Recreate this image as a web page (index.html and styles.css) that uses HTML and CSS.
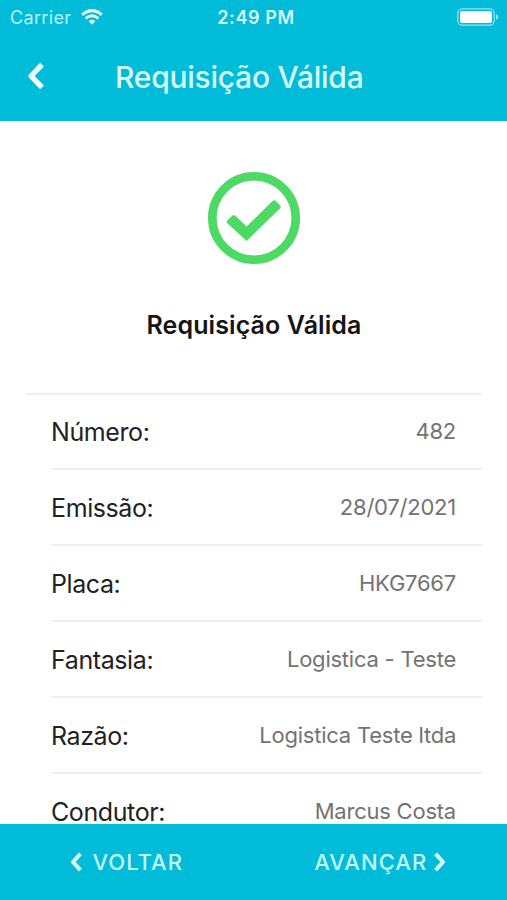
FILE: index.html
```
<!DOCTYPE html>
<html lang="pt-BR">
<head>
<meta charset="UTF-8">
<meta name="viewport" content="width=device-width, initial-scale=1.0">
<title>Requisição Válida</title>
<link rel="stylesheet" href="styles.css">
</head>
<body>
    <div class="app">
        <header class="header">
            <div class="status-bar">
                <div class="carrier">
                    <span class="carrier-name">Carrier</span>
                    <svg class="wifi" viewBox="0 0 22 16" width="22" height="16">
                        <path d="M1.2 5.8 Q11 -2.6 20.8 5.8" fill="none" stroke="#e6fcff" stroke-width="3.1"/>
                        <path d="M4.7 9.4 Q11 4.2 17.3 9.4" fill="none" stroke="#e6fcff" stroke-width="2.8"/>
                        <path d="M7.6 12.2 Q11 9.4 14.4 12.2 L11 15.8 Z" fill="#e6fcff"/>
                    </svg>
                </div>
                <span class="clock">2:49 PM</span>
                <div class="battery">
                    <svg viewBox="0 0 42 18" width="42" height="18">
                        <rect x="0.8" y="0.8" width="36.4" height="16.4" rx="4.5" fill="none" stroke="#8ee6f2" stroke-width="1.3"/>
                        <rect x="3" y="3" width="32" height="12" rx="2" fill="#fff"/>
                        <path d="M39 6 Q41.4 7 41.4 9 Q41.4 11 39 12 Z" fill="#8ee6f2"/>
                    </svg>
                </div>
            </div>
            <div class="toolbar">
                <svg class="back" viewBox="0 0 18 28" width="18" height="28">
                    <path d="M16 2.6 L5 14 L16 25.4" fill="none" stroke="#f2feff" stroke-width="5.4" stroke-linejoin="round"/>
                </svg>
                <h1 class="title">Requisição Válida</h1>
            </div>
        </header>

        <main class="content">
            <svg class="check" viewBox="0 0 92 92" width="92" height="92">
                <circle cx="46" cy="46" r="41.7" fill="none" stroke="#4cd964" stroke-width="8.6"/>
                <path d="M19.3 48.6 L24.4 43.5 Q25.7 42.4 27 43.5 L38.6 54.6 L64.8 28.8 Q66.2 27.6 67.6 28.8 L72.2 33.6 Q73.2 34.9 72.2 36.2 L38.6 69 L19.3 51.2 Q18.2 49.9 19.3 48.6 Z" fill="#4cd964"/>
            </svg>
            <h2 class="message">Requisição Válida</h2>

            <div class="list">
                <div class="item">
                    <span class="label">Número:</span>
                    <span class="note">482</span>
                </div>
                <div class="item">
                    <span class="label">Emissão:</span>
                    <span class="note">28/07/2021</span>
                </div>
                <div class="item">
                    <span class="label">Placa:</span>
                    <span class="note">HKG7667</span>
                </div>
                <div class="item">
                    <span class="label">Fantasia:</span>
                    <span class="note">Logistica - Teste</span>
                </div>
                <div class="item">
                    <span class="label">Razão:</span>
                    <span class="note">Logistica Teste ltda</span>
                </div>
                <div class="item item-last">
                    <span class="label">Condutor:</span>
                    <span class="note">Marcus Costa</span>
                </div>
            </div>
        </main>

        <footer class="footer">
            <button class="btn btn-prev">
                <svg viewBox="0 0 12 20" width="12" height="20">
                    <path d="M10.4 1.8 L3 10 L10.4 18.2" fill="none" stroke="#d8faff" stroke-width="4" stroke-linejoin="round"/>
                </svg>
                <span>VOLTAR</span>
            </button>
            <button class="btn btn-next">
                <span>AVANÇAR</span>
                <svg viewBox="0 0 12 20" width="12" height="20">
                    <path d="M1.6 1.8 L9 10 L1.6 18.2" fill="none" stroke="#d8faff" stroke-width="4" stroke-linejoin="round"/>
                </svg>
            </button>
        </footer>
    </div>
</body>
</html>
```
FILE: styles.css
```
* {
    box-sizing: border-box;
}

body {
    font-family: Inter, "Liberation Sans", sans-serif;
    margin: 0;
    padding: 0;
    background-color: #fff;
}

.app {
    display: flex;
    flex-direction: column;
    height: 900px;
    overflow: hidden;
}

/* Header */
.header {
    flex: none;
    height: 121px;
    background-color: #00bcd9;
}

.status-bar {
    display: grid;
    grid-template-columns: 1fr auto 1fr;
    align-items: center;
    height: 34px;
    padding: 0 8px 0 10px;
}

.carrier {
    display: flex;
    align-items: center;
    gap: 10px;
}

.carrier-name {
    color: #b5f4fc;
    font-size: 18px;
    letter-spacing: 0.35px;
}

.clock {
    margin-left: 3px;
    color: #d8faff;
    font-size: 18px;
    font-weight: 600;
    letter-spacing: 0.6px;
}

.battery {
    display: flex;
    justify-content: flex-end;
}

.toolbar {
    display: flex;
    align-items: center;
    height: 84px;
    padding-left: 26px;
}

.title {
    margin: 2px 0 0 71px;
    color: #d8faff;
    font-size: 30px;
    font-weight: 500;
    letter-spacing: -0.25px;
    white-space: nowrap;
}

/* Content */
.content {
    flex: 1;
    min-height: 0;
    padding: 51px 25px 0 26px;
}

.check {
    display: block;
    margin: 0 auto;
}

.message {
    margin: 45px 0 0;
    color: #151515;
    font-size: 25px;
    font-weight: 600;
    letter-spacing: 0.1px;
    line-height: 32px;
    text-align: center;
}

.list {
    margin-top: 52px;
    padding-left: 25px;
    border-top: 2px solid #f0f0f0;
}

.item {
    display: flex;
    align-items: center;
    justify-content: space-between;
    height: 76px;
    padding: 2px 26px 0 0;
    border-bottom: 2px solid #f0f0f0;
}

.item:first-child {
    height: 75px;
    padding-top: 1px;
}

.item-last {
    height: 54px;
    padding-top: 22px;
    border-bottom: 0;
}

.label {
    color: #222;
    font-size: 25px;
    letter-spacing: -0.4px;
}

.note {
    margin-bottom: 3px;
    color: #737373;
    font-size: 22px;
    letter-spacing: -0.23px;
}

/* Footer */
.footer {
    flex: none;
    display: flex;
    height: 76px;
    background-color: #00bcd9;
}

.btn {
    flex: 1;
    display: flex;
    align-items: center;
    justify-content: center;
    gap: 10px;
    padding: 0;
    border: 0;
    background: none;
    color: #c4f7fe;
    font-family: inherit;
    font-size: 22px;
    font-weight: 500;
    letter-spacing: 1.05px;
}

.btn-next {
    gap: 7px;
}
```
